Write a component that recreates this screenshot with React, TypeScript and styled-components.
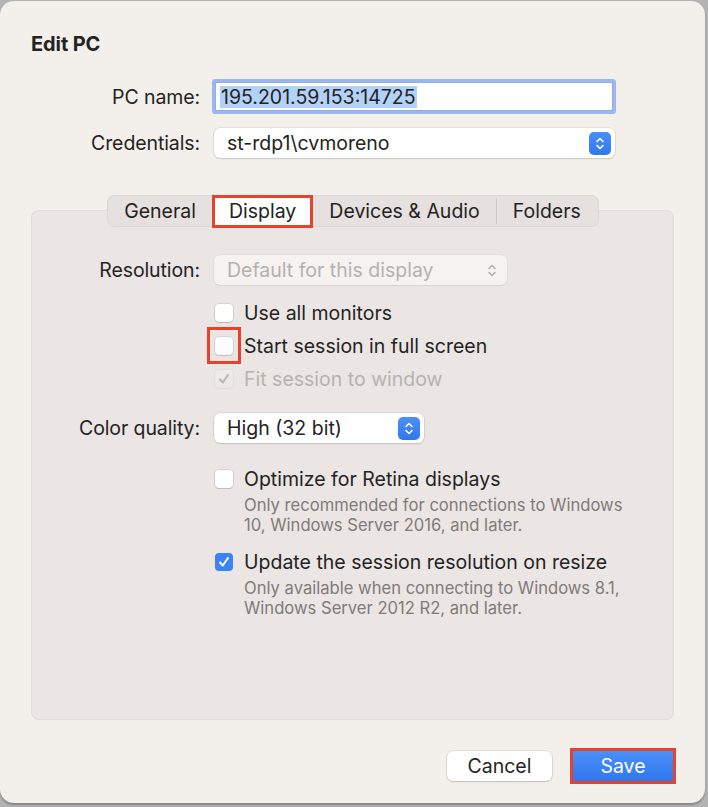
import React from "react";
import styled, { createGlobalStyle } from "styled-components";

const Global = createGlobalStyle`
  html, body { margin: 0; padding: 0; }
  body {
    background: #b3b3b3;
    font-family: Inter, "Noto Sans", "Liberation Sans", sans-serif;
    color: #232323;
    width: 708px;
    height: 807px;
    overflow: hidden;
  }
`;

const RED = "#e5432c";
const BLUE = "#3b83f6";
const FS = "19.5px";

const Window = styled.div`
  box-sizing: border-box;
  width: 705px;
  height: 802px;
  margin-top: 1px;
  border-radius: 14px;
  background: #f3efeb;
  box-shadow: 0 2px 2px rgba(0, 0, 0, 0.25);
  padding: 33px 31px 0 31px;
  display: flex;
  flex-direction: column;
`;

const Title = styled.h1`
  margin: 0;
  font-size: 20px;
  line-height: 20px;
  font-weight: 700;
  letter-spacing: -0.1px;
`;

const FormGrid = styled.div<{ $top: number }>`
  display: grid;
  grid-template-columns: 169px 1fr;
  column-gap: 14px;
  align-items: center;
  margin-top: ${(p) => p.$top}px;
`;

const Label = styled.div<{ $mt?: number }>`
  text-align: right;
  font-size: ${FS};
  letter-spacing: -0.1px;
  white-space: nowrap;
  margin-top: ${(p) => p.$mt ?? 0}px;
`;

const Field = styled.div<{ $mt?: number }>`
  grid-column: 2;
  margin-top: ${(p) => p.$mt ?? 0}px;
`;

const TextInput = styled.div`
  box-sizing: border-box;
  margin: 4px 3px 4px 2px;
  width: 396px;
  height: 27px;
  background: #fff;
  box-shadow: 0 0 0 1px #8faeea, 0 0 0 4px #9bb7ef;
  border-radius: 1px;
  display: flex;
  align-items: center;
  padding-left: 4px;
`;

const Selected = styled.span`
  background: #b4d2f8;
  font-size: ${FS};
  line-height: 22px;
  padding: 0 1px;
`;

const Popup = styled.div<{ $w: number; $disabled?: boolean }>`
  box-sizing: border-box;
  width: ${(p) => p.$w}px;
  height: 30px;
  border-radius: 6px;
  background: ${(p) => (p.$disabled ? "#f5f2f0" : "#fff")};
  box-shadow: ${(p) =>
    p.$disabled
      ? "0 0 0 0.5px rgba(0,0,0,0.06), 0 1px 1px rgba(0,0,0,0.05)"
      : "0 0 0 0.5px rgba(0,0,0,0.12), 0 1px 2px rgba(0,0,0,0.12)"};
  display: flex;
  align-items: center;
  justify-content: space-between;
  padding: 0 4px 0 13px;
  font-size: ${FS};
  white-space: nowrap;
  color: ${(p) => (p.$disabled ? "#b5b1ae" : "#232323")};
`;

const Stepper = styled.div<{ $disabled?: boolean }>`
  width: 22px;
  height: 23px;
  border-radius: 5px;
  background: ${(p) => (p.$disabled ? "transparent" : "linear-gradient(#4b8ff8, #2f77ef)")};
  display: flex;
  align-items: center;
  justify-content: center;
`;

const Chevrons = ({ color }: { color: string }) => (
  <svg width="10" height="15" viewBox="0 0 10 15">
    <path d="M2 5.5 L5 2.5 L8 5.5 M2 9.5 L5 12.5 L8 9.5" fill="none" stroke={color} strokeWidth="1.6" strokeLinecap="round" strokeLinejoin="round" />
  </svg>
);

const Section = styled.div`
  margin-top: 37px;
  display: flex;
  flex-direction: column;
  align-items: center;
`;

const TabBar = styled.div`
  position: relative;
  z-index: 1;
  box-sizing: border-box;
  height: 32px;
  width: 492px;
  border-radius: 8px;
  background: #e6e1de;
  box-shadow: inset 0 0 0 1px #ddd8d5;
  display: flex;
  align-items: center;
  justify-content: center;
`;

const Tab = styled.div<{ $active?: boolean; $sep?: boolean }>`
  box-sizing: border-box;
  height: ${(p) => (p.$active ? "33px" : "26px")};
  display: flex;
  align-items: center;
  padding: 0 ${(p) => (p.$active ? 14 : 16)}px;
  font-size: ${FS};
  white-space: nowrap;
  background: ${(p) => (p.$active ? "#fff" : "transparent")};
  border: ${(p) => (p.$active ? `3px solid ${RED}` : "none")};
  border-right: ${(p) => (p.$sep ? "1px solid #cfcac7" : p.$active ? `3px solid ${RED}` : "none")};
`;

const GroupBox = styled.div`
  box-sizing: border-box;
  align-self: stretch;
  margin-top: -17px;
  height: 510px;
  border-radius: 8px;
  background: #ebe6e3;
  box-shadow: inset 0 0 0 1px #e1dcd9;
  padding-top: 45px;
`;

const CheckList = styled.div<{ $mt: number }>`
  grid-column: 2;
  margin-top: ${(p) => p.$mt}px;
  display: flex;
  flex-direction: column;
`;

const CheckRow = styled.div<{ $disabled?: boolean }>`
  height: 33px;
  display: flex;
  align-items: center;
  gap: 11px;
  padding-left: 1px;
  font-size: ${FS};
  white-space: nowrap;
  color: ${(p) => (p.$disabled ? "#b7b3b0" : "#232323")};
`;

const Box = styled.div<{ $checked?: boolean; $disabled?: boolean }>`
  box-sizing: border-box;
  width: 18px;
  height: 18px;
  border-radius: 4px;
  flex: none;
  display: flex;
  align-items: center;
  justify-content: center;
  background: ${(p) => (p.$disabled ? "#ede9e6" : p.$checked ? BLUE : "#fff")};
  box-shadow: ${(p) =>
    p.$disabled
      ? "0 0 0 0.5px rgba(0,0,0,0.08)"
      : p.$checked
      ? "none"
      : "0 0 0 0.5px rgba(0,0,0,0.18), 0 1px 1px rgba(0,0,0,0.1)"};
`;

const Marker = styled.div`
  display: flex;
  align-items: center;
  justify-content: center;
  width: 34px;
  height: 37px;
  margin-left: -8px;
  margin-right: -8px;
  box-sizing: border-box;
  border: 3px solid ${RED};
`;

const Check = ({ color }: { color: string }) => (
  <svg width="12" height="12" viewBox="0 0 12 12">
    <path d="M2 6.5 L4.8 9.5 L10 2" fill="none" stroke={color} strokeWidth="2" strokeLinecap="round" strokeLinejoin="round" />
  </svg>
);

const Desc = styled.div`
  padding-left: 30px;
  font-size: 16.6px;
  line-height: 20px;
  color: #7f7b79;
  white-space: nowrap;
`;

const Footer = styled.div`
  margin-top: 31px;
  display: flex;
  justify-content: flex-end;
  align-items: center;
  gap: 21px;
  padding-right: 1px;
`;

const Button = styled.div<{ $primary?: boolean }>`
  box-sizing: border-box;
  height: 30px;
  width: ${(p) => (p.$primary ? 100 : 105)}px;
  display: flex;
  align-items: center;
  justify-content: center;
  font-size: ${FS};
  color: ${(p) => (p.$primary ? "#fff" : "#232323")};
  background: ${(p) => (p.$primary ? "linear-gradient(#4b90f8, #2f77ef)" : "#fff")};
  box-shadow: ${(p) =>
    p.$primary
      ? `0 0 0 3px ${RED}`
      : "0 0 0 0.5px rgba(0,0,0,0.12), 0 1px 2px rgba(0,0,0,0.15)"};
  border-radius: ${(p) => (p.$primary ? "0" : "6px")};
`;

export default function App() {
  return (
    <>
      <Global />
      <Window>
        <Title>Edit PC</Title>
        <FormGrid $top={25}>
          <Label>PC name:</Label>
          <Field>
            <TextInput>
              <Selected>195.201.59.153:14725</Selected>
            </TextInput>
          </Field>
          <Label $mt={14}>Credentials:</Label>
          <Field $mt={14}>
            <Popup $w={401}>
              st-rdp1\cvmoreno
              <Stepper>
                <Chevrons color="#fff" />
              </Stepper>
            </Popup>
          </Field>
        </FormGrid>

        <Section>
          <TabBar>
            <Tab>General</Tab>
            <Tab $active>Display</Tab>
            <Tab $sep>Devices &amp; Audio</Tab>
            <Tab>Folders</Tab>
          </TabBar>
          <GroupBox>
            <FormGrid $top={0}>
              <Label>Resolution:</Label>
              <Field>
                <Popup $w={293} $disabled>
                  Default for this display
                  <Stepper $disabled>
                    <Chevrons color="#b5b1ae" />
                  </Stepper>
                </Popup>
              </Field>
              <CheckList $mt={11}>
                <CheckRow>
                  <Box />
                  Use all monitors
                </CheckRow>
                <CheckRow>
                  <Marker>
                    <Box />
                  </Marker>
                  Start session in full screen
                </CheckRow>
                <CheckRow $disabled>
                  <Box $checked $disabled>
                    <Check color="#b9b5b2" />
                  </Box>
                  Fit session to window
                </CheckRow>
              </CheckList>
              <Label $mt={18}>Color quality:</Label>
              <Field $mt={18}>
                <Popup $w={210}>
                  High (32 bit)
                  <Stepper>
                    <Chevrons color="#fff" />
                  </Stepper>
                </Popup>
              </Field>
              <CheckList $mt={19}>
                <CheckRow>
                  <Box />
                  Optimize for Retina displays
                </CheckRow>
                <Desc>
                  Only recommended for connections to Windows
                  <br />
                  10, Windows Server 2016, and later.
                </Desc>
              </CheckList>
              <CheckList $mt={10}>
                <CheckRow>
                  <Box $checked>
                    <Check color="#fff" />
                  </Box>
                  Update the session resolution on resize
                </CheckRow>
                <Desc>
                  Only available when connecting to Windows 8.1,
                  <br />
                  Windows Server 2012 R2, and later.
                </Desc>
              </CheckList>
            </FormGrid>
          </GroupBox>
        </Section>

        <Footer>
          <Button>Cancel</Button>
          <Button $primary>Save</Button>
        </Footer>
      </Window>
    </>
  );
}
